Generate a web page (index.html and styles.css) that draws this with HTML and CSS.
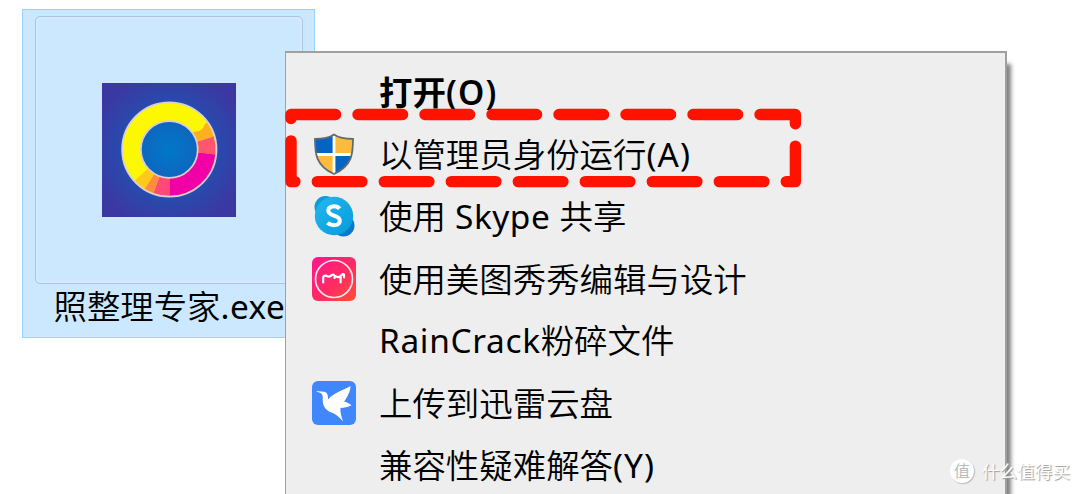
FILE: index.html
```html
<!DOCTYPE html>
<html lang="zh-CN">

<head>
    <meta charset="UTF-8">
    <meta name="viewport" content="width=device-width, initial-scale=1.0">
    <title>右键菜单</title>
    <link rel="stylesheet" href="styles.css">
</head>

<body>
    <div class="container">
        <div class="file">
            <div class="thumb">
                <svg class="logo" viewBox="0 0 134 134">
                    <defs>
                        <radialGradient id="bg" cx="50%" cy="50%" r="62%">
                            <stop offset="0" stop-color="#0078ca" />
                            <stop offset="0.3" stop-color="#0c69bf" />
                            <stop offset="0.62" stop-color="#2a48ac" />
                            <stop offset="0.95" stop-color="#3c38a2" />
                        </radialGradient>
                    </defs>
                    <rect width="134" height="134" fill="url(#bg)" />
                    <g class="ring" fill="none" transform="translate(67.3 66.5)">
                        <circle r="37.8" stroke="#d8cddd" stroke-width="20.5" />
                        <circle r="37.8" stroke="#fcf800" stroke-width="17" />
                        <path d="M30.8 -22A37.8 37.8 0 0 1 36.3 -10.5" stroke="#ffaf20" stroke-width="17" />
                        <path d="M36.3 -10.5A37.8 37.8 0 0 1 37.6 4" stroke="#ff5570" stroke-width="17" />
                        <path d="M37.6 4A37.8 37.8 0 0 1 0 37.8" stroke="#f100a8" stroke-width="17" />
                        <path d="M0 37.8A37.8 37.8 0 0 1 -13 35.5" stroke="#ff4a78" stroke-width="17" />
                        <path d="M-13 35.5A37.8 37.8 0 0 1 -20 32" stroke="#ff8c40" stroke-width="17" />
                        <path d="M-20 32A37.8 37.8 0 0 1 -28 25.3" stroke="#ffc81c" stroke-width="17" />
                        <circle cx="27" cy="-26.5" r="8.4" fill="#fcf800" />
                    </g>
                </svg>
            </div>
            <p class="name">照整理专家<i class="ext">.exe</i></p>
        </div>

        <ul class="menu">
            <li class="bold"><span class="icon"></span><span class="text">打开<i>(O)</i></span></li>
            <li>
                <svg class="icon" viewBox="0 0 44 44">
                    <clipPath id="shield">
                        <path d="M22 2.5C17 6 10 7 3 7C3 22 4 34 22 42C40 34 41 22 41 7C34 7 27 6 22 2.5Z" />
                    </clipPath>
                    <g clip-path="url(#shield)">
                        <rect width="44" height="44" fill="#0563c4" />
                        <path d="M22 0H44V22H22ZM0 22H22V44H0Z" fill="#fdbb3d" />
                        <path d="M22 0V44M0 22.5H44" stroke="#fff" stroke-width="2.8" />
                    </g>
                    <path d="M22 2.5C17 6 10 7 3 7C3 22 4 34 22 42C40 34 41 22 41 7C34 7 27 6 22 2.5Z" fill="none" stroke="#626b70" stroke-width="1.8" />
                </svg>
                <span class="text">以管理员身份运行<i>(A)</i></span>
            </li>
            <li>
                <svg class="icon" viewBox="0 0 44 44">
                    <defs>
                        <linearGradient id="sky" x1="0" y1="0" x2="1" y2="1">
                            <stop offset="0" stop-color="#22b8ee" />
                            <stop offset="1" stop-color="#079bdc" />
                        </linearGradient>
                    </defs>
                    <circle cx="13.5" cy="13" r="11" fill="#0f9ad8" />
                    <circle cx="31.5" cy="31.5" r="11" fill="#0878cd" />
                    <circle cx="22" cy="22" r="19.2" fill="url(#sky)" />
                    <path d="M27.5 14.8C25 11.4 16.3 11.2 16.3 16.8C16.3 22.6 27.8 20.6 27.8 26.4C27.8 32.4 19 32.2 15.5 28.8" fill="none" stroke="#fff" stroke-width="4" />
                </svg>
                <span class="text">使用<i class="skype"> Skype </i>共享</span>
            </li>
            <li>
                <svg class="icon" viewBox="0 0 44 44">
                    <defs>
                        <linearGradient id="pink" x1="0" y1="0" x2="1" y2="1">
                            <stop offset="0" stop-color="#ff1590" />
                            <stop offset="0.55" stop-color="#ff2b62" />
                            <stop offset="1" stop-color="#ff5038" />
                        </linearGradient>
                    </defs>
                    <rect width="44" height="44" rx="6" fill="url(#pink)" />
                    <circle cx="22" cy="22" r="18.5" fill="none" stroke="#ffe3ea" stroke-width="1.7" />
                    <path d="M11.2 25.5V21.5Q11 18.2 14 18.6Q17 20.6 19 18.6Q21.8 16.4 22.6 19V21M23 18.8Q25.5 20.8 28 19.5Q31.8 15.5 32 18V20.5M28.6 20V25.5" fill="none" stroke="#fff" stroke-width="2.2" stroke-linecap="round" stroke-linejoin="round" />
                </svg>
                <span class="text">使用美图秀秀编辑与设计</span>
            </li>
            <li><span class="icon"></span><span class="text"><i class="rain">RainCrack</i>粉碎文件</span></li>
            <li>
                <svg class="icon" viewBox="0 0 44 44">
                    <rect width="44" height="44" rx="6" fill="#4086fd" />
                    <path d="M4 10.5C7 10 9.5 10.5 12 10.8C15.3 11.5 16.2 14 16 18.5C22 11.5 30 10 38.5 5C38.5 10.5 35 16.5 32 20.5C35 21 37 22.5 39.5 24.2C36 26 32 26.5 28.5 27C28 31.5 29.5 35.5 31 40.5C27.5 36 24 33 19.5 31.5C12.5 29 10 23.5 10.8 15.8C10.7 12.5 8 11.5 4 10.5Z" fill="#fff" />
                </svg>
                <span class="text">上传到迅雷云盘</span>
            </li>
            <li><span class="icon"></span><span class="text">兼容性疑难解答<i>(Y)</i></span></li>
        </ul>

        <!-- 红色虚线框 -->
        <svg class="mark" viewBox="0 0 520 84">
            <path d="M9 9.5H513.4V76.6H9Z" />
        </svg>

        <!-- 水印 -->
        <div class="watermark">
            <span class="badge">值</span>
            <span>什么值得买</span>
        </div>
    </div>
</body>

</html>
```

FILE: styles.css
```css
* {
    margin: 0;
    padding: 0;
    list-style: none;
    box-sizing: border-box;
}

body {
    background: #fff;
    font-family: "Noto Sans CJK SC", sans-serif;
}

/* 英文部分 */
i {
    font-family: "Noto Sans", sans-serif;
    font-style: normal;
    font-weight: 400;
}

.container {
    width: 1080px;
    height: 494px;
    position: relative;
    overflow: hidden;
}

.file {
    width: 293px;
    height: 329px;
    margin: 9px 0 0 22px;
    padding: 6px 12px 0;
    background: #cce8ff;
    border: 1px solid #99d1ff;
    float: left;
}

.thumb {
    width: 268px;
    height: 268px;
    display: flex;
    justify-content: center;
    align-items: center;
    border: 1px solid #a9c5df;
    border-radius: 5px;
    box-shadow: inset 0 0 0 2px #d5eaff;
}

.logo {
    width: 134px;
    height: 134px;
}

.name {
    padding-left: 18.5px;
    line-height: 42px;
    font-size: 33.4px;
    font-weight: 350;
    white-space: nowrap;
}

.ext {
    letter-spacing: 0.5px;
}

.menu {
    width: 722px;
    height: 460px;
    padding-top: 8px;
    position: absolute;
    left: 285px;
    top: 51px;
    background: #eee;
    border: 2px solid #a0a0a0;
    border-left-width: 1px;
    box-shadow: 5px 12px 4px -1px rgba(0, 0, 0, 0.5);
}

.menu li {
    height: 62.2px;
    padding-left: 26px;
    display: flex;
    align-items: center;
    font-size: 33.45px;
    font-weight: 350;
    color: #000;
    white-space: nowrap;
}

.menu .icon {
    width: 44px;
    height: 44px;
    margin-right: 23px;
    flex: none;
}

.menu .text {
    line-height: 42px;
    padding-bottom: 2px;
}

.menu i {
    letter-spacing: 1px;
}

.menu .skype {
    letter-spacing: 0.5px;
}

.menu .rain {
    letter-spacing: 0.65px;
}

.menu .bold {
    font-weight: 700;
}

.menu .bold i {
    font-weight: 600;
    letter-spacing: 1.2px;
}

.mark {
    width: 520px;
    height: 84px;
    position: absolute;
    left: 282px;
    top: 105px;
    fill: none;
    stroke: #ff1200;
    stroke-width: 11.4;
    stroke-linecap: round;
    stroke-linejoin: round;
    stroke-dasharray: 44.6 22.4;
}

.watermark {
    position: absolute;
    left: 950px;
    top: 458px;
    display: flex;
    align-items: center;
    gap: 8px;
    font-size: 17.6px;
    line-height: 26px;
    color: #fff;
    text-shadow: 1px 1px 1px #999;
    white-space: nowrap;
}

.watermark .badge {
    width: 24px;
    height: 24px;
    line-height: 23px;
    border-radius: 50%;
    background: #fff;
    box-shadow: 1px 1px 1px #bbb;
    color: #bbb;
    font-size: 16px;
    text-align: center;
    text-shadow: none;
}
```
